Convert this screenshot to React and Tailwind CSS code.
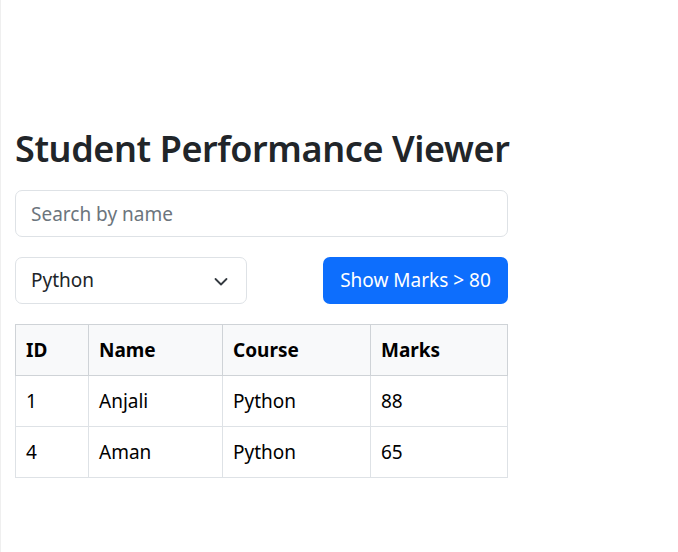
export default function App() {
  const rows = [
    { id: 1, name: "Anjali", course: "Python", marks: 88 },
    { id: 4, name: "Aman", course: "Python", marks: 65 },
  ];

  return (
    <div
      className="min-h-[552px] bg-white border-l border-[#efefef] text-[#212529]"
      style={{ fontFamily: '"Noto Sans", "Open Sans", sans-serif' }}
    >
      <div className="w-[493px] ml-[14px] pt-[127px]">
        <h1 className="text-[36px] leading-[43px] font-semibold mb-[20px] whitespace-nowrap tracking-[-0.4px]">
          Student Performance Viewer
        </h1>

        <input
          type="text"
          placeholder="Search by name"
          className="block w-full h-[47px] px-[15px] text-[19px] border border-[#dee2e6] rounded-[7px] placeholder:text-[#6c757d] outline-none"
        />

        <div className="flex justify-between items-center mt-[20px]">
          <div className="relative w-[232px] h-[47px] border border-[#dee2e6] rounded-[7px] flex items-center pl-[15px] text-[19px]">
            <span>Python</span>
            <svg
              className="absolute right-[17px] top-[18px]"
              width="16"
              height="12"
              viewBox="0 0 16 12"
              fill="none"
              stroke="#343a40"
              strokeWidth="1.8"
              strokeLinecap="round"
              strokeLinejoin="round"
            >
              <path d="M2.5 3l5.5 5.5 5.5-5.5" />
            </svg>
          </div>
          <button
            type="button"
            className="w-[185px] h-[47px] rounded-[7px] bg-[#0d6efd] text-white text-[19px]"
          >
            Show Marks &gt; 80
          </button>
        </div>

        <table className="w-full mt-[20px] border-collapse text-[19px] text-black">
          <thead>
            <tr className="bg-[#f8f9fa] h-[51px]">
              <th className="w-[73px] border border-[#cfd3d7] text-left font-bold px-[10px]">ID</th>
              <th className="w-[134px] border border-[#cfd3d7] text-left font-bold px-[10px]">Name</th>
              <th className="w-[148px] border border-[#cfd3d7] text-left font-bold px-[10px]">Course</th>
              <th className="border border-[#cfd3d7] text-left font-bold px-[10px]">Marks</th>
            </tr>
          </thead>
          <tbody>
            {rows.map((r) => (
              <tr key={r.id} className="h-[51px]">
                <td className="border border-[#dee2e6] px-[10px]">{r.id}</td>
                <td className="border border-[#dee2e6] px-[10px]">{r.name}</td>
                <td className="border border-[#dee2e6] px-[10px]">{r.course}</td>
                <td className="border border-[#dee2e6] px-[10px]">{r.marks}</td>
              </tr>
            ))}
          </tbody>
        </table>
      </div>
    </div>
  );
}
